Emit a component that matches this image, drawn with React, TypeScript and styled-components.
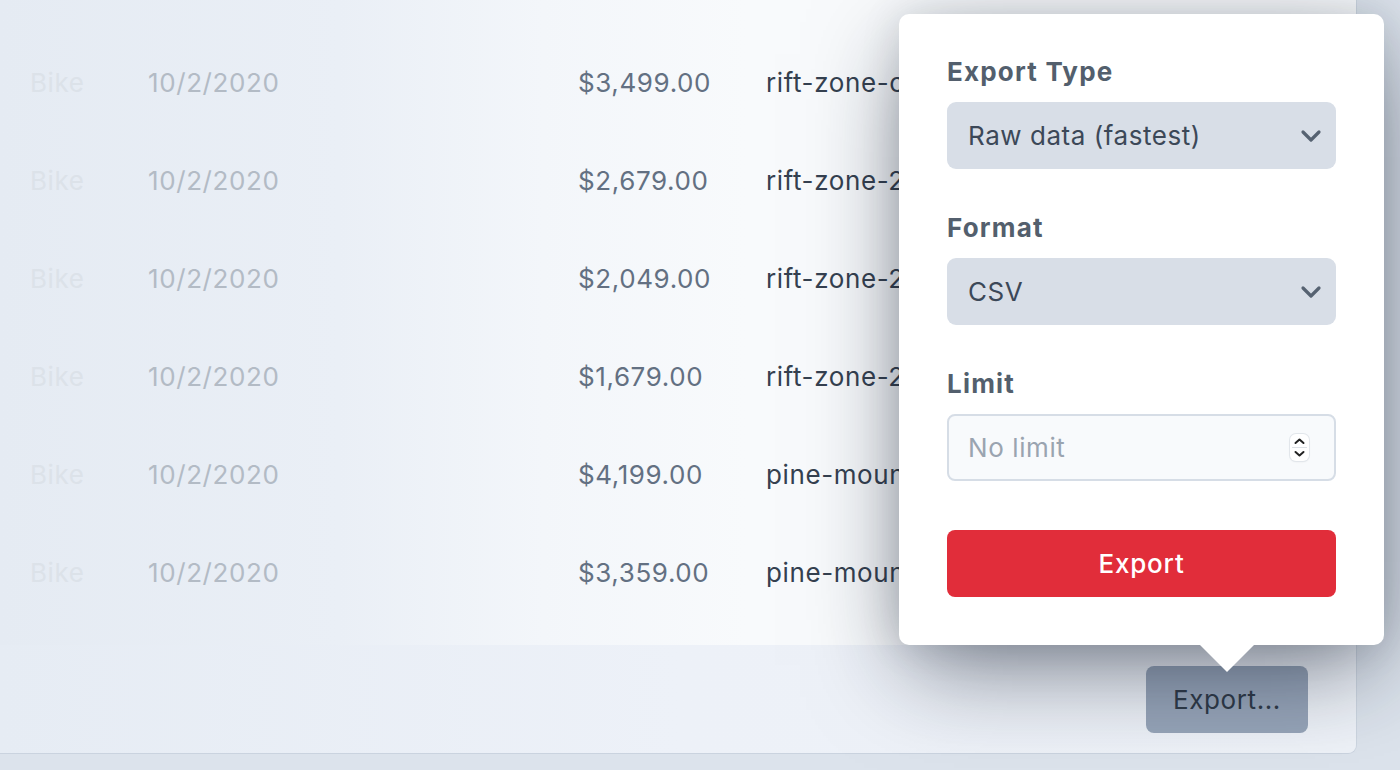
import React from "react";
import styled, { createGlobalStyle } from "styled-components";

const Global = createGlobalStyle`
  html, body { margin: 0; padding: 0; }
  body {
    background: #dfe6ee;
    font-family: Inter, "Noto Sans", "Liberation Sans", sans-serif;
    overflow: hidden;
  }
`;

const Page = styled.div`
  position: relative;
  width: 1400px;
  height: 770px;
  overflow: hidden;
  background: #dce3ec;
`;

const Card = styled.div`
  width: 1356px;
  display: flex;
  flex-direction: column;
  border-right: 1px solid #cdd6e1;
  border-bottom: 1px solid #cad3df;
  border-bottom-right-radius: 9px;
  overflow: hidden;
`;

const Rows = styled.div`
  height: 645px;
  box-sizing: border-box;
  padding-top: 33px;
  background: linear-gradient(
    to right,
    #e5ebf3 0%,
    #eaeff6 25%,
    #f3f6fa 40%,
    #f8fafc 55%,
    #f8fafc 100%
  );
`;

const Row = styled.div`
  height: 98px;
  display: grid;
  grid-template-columns: 118px 430px 188px 133px;
  align-items: center;
  padding-left: 30px;
  font-size: 26px;
  letter-spacing: 0.6px;
  white-space: nowrap;
`;

const Cell = styled.div<{ $tone: string }>`
  color: ${(p) => p.$tone};
  overflow: hidden;
  text-overflow: clip;
`;

const Footer = styled.div`
  height: 108px;
  display: flex;
  align-items: center;
  justify-content: flex-end;
  padding-right: 48px;
  background: linear-gradient(to right, #e6ecf4 0%, #edf1f8 50%, #eef2f8 100%);
`;

const GhostButton = styled.button`
  width: 162px;
  height: 67px;
  border: none;
  border-radius: 8px;
  background: #97a5b9;
  color: #2f3a48;
  font-family: inherit;
  font-size: 26px;
  letter-spacing: 0.6px;
  padding: 0;
`;

const Popover = styled.div`
  position: absolute;
  left: 899px;
  top: 14px;
  width: 485px;
  box-sizing: border-box;
  padding: 42px 48px 48px;
  background: #ffffff;
  border-radius: 10px;
  box-shadow: 0 30px 90px -10px rgba(15, 23, 42, 0.55),
    0 0 40px rgba(15, 23, 42, 0.12);
  display: flex;
  flex-direction: column;

  &::after {
    content: "";
    position: absolute;
    left: 300px;
    bottom: -27px;
    width: 0;
    height: 0;
    border-left: 28px solid transparent;
    border-right: 28px solid transparent;
    border-top: 28px solid #ffffff;
  }
`;

const Group = styled.div<{ $gap: number }>`
  display: flex;
  flex-direction: column;
  gap: 14px;
  margin-bottom: ${(p) => p.$gap}px;
`;

const Label = styled.label`
  font-size: 26px;
  line-height: 32px;
  font-weight: 700;
  letter-spacing: 1.2px;
  color: #535f6d;
`;

const SelectBox = styled.div`
  height: 67px;
  border-radius: 9px;
  background: #d8dee7;
  display: flex;
  align-items: center;
  justify-content: space-between;
  padding: 0 14px 0 21px;
  color: #3c4858;
  font-size: 26px;
  letter-spacing: 0.55px;
`;

const InputBox = styled.div`
  height: 67px;
  box-sizing: border-box;
  border-radius: 8px;
  border: 2px solid #d6dde6;
  background: #f8fafc;
  display: flex;
  align-items: center;
  justify-content: space-between;
  padding: 0 25px 0 19px;
`;

const TextInput = styled.input`
  border: none;
  outline: none;
  background: transparent;
  font-family: inherit;
  font-size: 26px;
  letter-spacing: 0.6px;
  color: #3c4858;
  width: 250px;
  padding: 0;
  &::placeholder {
    color: #9aa4b0;
  }
`;

const Spinner = styled.span`
  width: 19px;
  height: 27px;
  box-sizing: border-box;
  border-radius: 6px;
  background: #ffffff;
  box-shadow: 0 0 0 1px #e2e6eb, 0 1px 2px rgba(0, 0, 0, 0.08);
  display: flex;
  align-items: center;
  justify-content: center;
`;

const PrimaryButton = styled.button`
  height: 67px;
  border: none;
  border-radius: 8px;
  background: #e12d3a;
  color: #ffffff;
  font-family: inherit;
  font-size: 26px;
  font-weight: 500;
  letter-spacing: 0.8px;
  padding: 0;
`;

const Chevron = () => (
  <svg width="22" height="20" viewBox="0 0 22 20">
    <path
      d="M3 6 L11 14 L19 6"
      fill="none"
      stroke="#566271"
      strokeWidth="3.2"
      strokeLinecap="round"
      strokeLinejoin="round"
    />
  </svg>
);

const SpinIcon = () => (
  <svg width="19" height="27" viewBox="0 0 19 27">
    <path d="M5.5 9 L9.5 5.5 L13.5 9" fill="none" stroke="#222" strokeWidth="2" strokeLinecap="round" strokeLinejoin="round" />
    <line x1="2" y1="13.5" x2="17" y2="13.5" stroke="#dde1e6" strokeWidth="1" />
    <path d="M5.5 18 L9.5 21.5 L13.5 18" fill="none" stroke="#222" strokeWidth="2" strokeLinecap="round" strokeLinejoin="round" />
  </svg>
);

const rows = [
  ["$3,499.00", "rift-zone-carbon"],
  ["$2,679.00", "rift-zone-29"],
  ["$2,049.00", "rift-zone-27"],
  ["$1,679.00", "rift-zone-29x"],
  ["$4,199.00", "pine-mountain"],
  ["$3,359.00", "pine-mountain-2"],
];

export default function App() {
  return (
    <Page>
      <Global />
      <Card>
        <Rows>
          {rows.map(([price, name]) => (
            <Row key={price}>
              <Cell $tone="#dce2e9">Bike</Cell>
              <Cell $tone="#b3bbc5">10/2/2020</Cell>
              <Cell $tone="#637082">{price}</Cell>
              <Cell $tone="#354150">{name}</Cell>
            </Row>
          ))}
        </Rows>
        <Footer>
          <GhostButton>Export...</GhostButton>
        </Footer>
      </Card>
      <Popover>
        <Group $gap={43}>
          <Label>Export Type</Label>
          <SelectBox>
            <span>Raw data (fastest)</span>
            <Chevron />
          </SelectBox>
        </Group>
        <Group $gap={43}>
          <Label>Format</Label>
          <SelectBox>
            <span>CSV</span>
            <Chevron />
          </SelectBox>
        </Group>
        <Group $gap={49}>
          <Label>Limit</Label>
          <InputBox>
            <TextInput placeholder="No limit" />
            <Spinner>
              <SpinIcon />
            </Spinner>
          </InputBox>
        </Group>
        <PrimaryButton>Export</PrimaryButton>
      </Popover>
    </Page>
  );
}
